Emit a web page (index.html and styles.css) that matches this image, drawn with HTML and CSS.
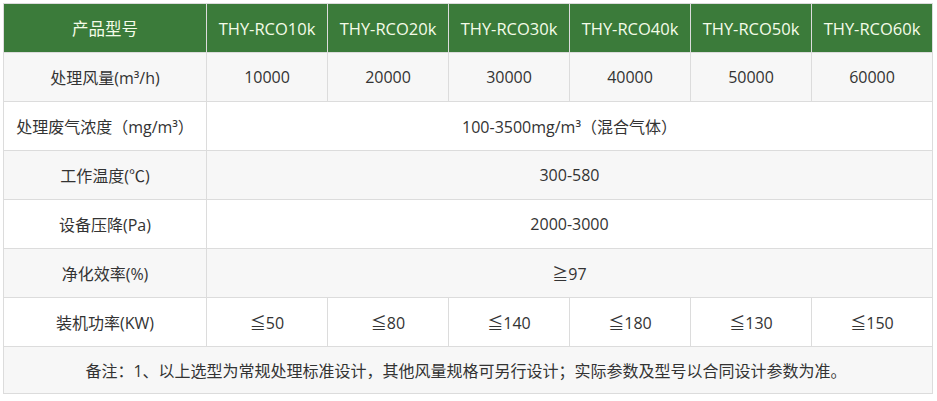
FILE: index.html
```html
<!DOCTYPE html>
<html lang="zh">
<head>
<meta charset="utf-8">
<link rel="stylesheet" href="styles.css">
</head>
<body>
<table class="spec">
  <colgroup>
    <col class="c-label">
    <col class="c-val"><col class="c-val"><col class="c-val">
    <col class="c-val"><col class="c-val"><col class="c-val">
  </colgroup>
  <thead>
    <tr class="head">
      <th>产品型号</th>
      <th>THY-RCO10k</th>
      <th>THY-RCO20k</th>
      <th>THY-RCO30k</th>
      <th>THY-RCO40k</th>
      <th>THY-RCO50k</th>
      <th>THY-RCO60k</th>
    </tr>
  </thead>
  <tbody>
    <tr class="gray">
      <td>处理风量(m³/h)</td>
      <td>10000</td><td>20000</td><td>30000</td><td>40000</td><td>50000</td><td>60000</td>
    </tr>
    <tr class="white">
      <td>处理废气浓度（mg/m³）</td>
      <td colspan="6">100-3500mg/m³（混合气体）</td>
    </tr>
    <tr class="gray">
      <td>工作温度(℃)</td>
      <td colspan="6">300-580</td>
    </tr>
    <tr class="white">
      <td>设备压降(Pa)</td>
      <td colspan="6">2000-3000</td>
    </tr>
    <tr class="gray">
      <td>净化效率(%)</td>
      <td colspan="6">≧97</td>
    </tr>
    <tr class="white">
      <td>装机功率(KW)</td>
      <td>≦50</td><td>≦80</td><td>≦140</td><td>≦180</td><td>≦130</td><td>≦150</td>
    </tr>
    <tr class="gray note">
      <td colspan="7">备注：1、以上选型为常规处理标准设计，其他风量规格可另行设计；实际参数及型号以合同设计参数为准。</td>
    </tr>
  </tbody>
</table>
</body>
</html>
```

FILE: styles.css
```css
html, body {
  margin: 0;
  padding: 0;
  background: #ffffff;
}
body {
  padding: 3px 0 0 3px;
  font-family: "Open Sans", "Noto Sans CJK SC", sans-serif;
  font-size: 16px;
  color: #333333;
}
.spec {
  border-collapse: collapse;
  width: 930px;
  table-layout: fixed;
  border: 1px solid #dcdcdc;
}
.c-label { width: 203px; }
.c-val { width: 121px; }
.spec th, .spec td {
  border: 1px solid #dcdcdc;
  text-align: center;
  vertical-align: middle;
  padding: 0;
  height: 48px;
  font-weight: normal;
  white-space: nowrap;
}
.head th {
  background: #3b7b3a;
  color: #f4fbe8;
  font-size: 16.5px;
}
.gray td { background: #f7f7f7; }
.white td { background: #ffffff; }
.note td {
  height: 46px;
  padding-right: 4px;
}
```
